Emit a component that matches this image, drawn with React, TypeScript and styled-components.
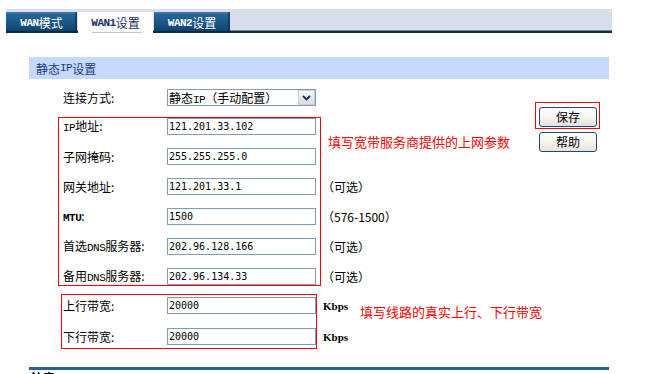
import React from 'react';
import styled, { createGlobalStyle, css } from 'styled-components';

const GlobalStyle = createGlobalStyle`
  html, body { margin: 0; padding: 0; background: #fff; }
  body {
    font-family: "Noto Sans CJK SC", "Liberation Sans", sans-serif;
    font-size: 12px;
    color: #000;
  }
  * { box-sizing: border-box; }
`;

const Page = styled.div`
  width: 649px;
  height: 374px;
  overflow: hidden;
  padding-top: 9px;
`;

const TabBar = styled.div`
  display: flex;
  align-items: flex-end;
  gap: 1px;
  margin-left: 6px;
  width: 606px;
  height: 24px;
  background: #d8dfea;
  border-bottom: 2px solid #0f2a38;
  box-shadow: inset 0 -1px 0 #6f8aa4;
`;

const Tab = styled.div<{ $active?: boolean; $w: number }>`
  position: relative;
  width: ${(p) => p.$w}px;
  height: 21px;
  margin-bottom: -2px;
  padding-top: 1px;
  display: flex;
  align-items: center;
  justify-content: center;
  font-size: 12px;
  line-height: 1;
  white-space: nowrap;
  color: ${(p) => (p.$active ? '#1b2f6b' : '#fff')};
  background: ${(p) =>
    p.$active
      ? '#fff'
      : 'linear-gradient(#4a86b2 0, #28679a 2px, #1b5a8a 40%, #12497a 80%, #0c3656 100%)'};
  ${(p) =>
    !p.$active &&
    css`
      box-shadow: inset -2px 0 0 rgba(5, 30, 50, 0.45), inset 0 -2px 0 #0a2a40;
    `}
  ${(p) =>
    p.$active &&
    css`
      &::after {
        content: '';
        position: absolute;
        left: 14px;
        right: 11px;
        bottom: 0;
        height: 1px;
        background: #c4c4c4;
      }
    `}
`;

const Half = styled.span<{ $bold?: boolean }>`
  font-family: "Liberation Mono", "DejaVu Sans Mono", monospace;
  font-size: 11px;
  letter-spacing: -0.5px;
  font-weight: ${(p) => (p.$bold ? 700 : 400)};
`;

const SectionHeader = styled.div`
  margin: 24px 0 0 29px;
  width: 580px;
  height: 22px;
  padding-left: 7px;
  display: flex;
  align-items: center;
  background: #c5d9fc;
  color: #1c3c78;
  font-size: 12px;
`;

const Main = styled.div`
  display: flex;
  align-items: flex-start;
  margin-left: 29px;
  width: 580px;
`;

const FormColumn = styled.div`
  width: 506px;
  padding: 10px 0 0 29px;
  display: flex;
  flex-direction: column;
`;

const ConnRow = styled.div`
  display: flex;
  align-items: center;
  height: 17px;
  padding-left: 5px;
`;

const FieldLabel = styled.span`
  width: 104px;
  flex: none;
  font-size: 12px;
  line-height: 17px;
  white-space: nowrap;
`;

const SelectBox = styled.div`
  width: 149px;
  height: 17px;
  border: 1px solid #7f9db9;
  display: flex;
  align-items: center;
  justify-content: space-between;
  padding-left: 1px;
  font-size: 12px;
  white-space: nowrap;
  background: #fff;
`;

const SelectArrow = styled.span`
  width: 17px;
  height: 15px;
  display: flex;
  align-items: center;
  justify-content: center;
  background: linear-gradient(#f7f7f7, #dcdcdc);
  border: 1px solid #c3cfdc;
`;

const Block = styled.div<{ $top: number }>`
  display: flex;
  align-items: flex-start;
  margin-top: ${(p) => p.$top}px;
`;

const RedBox = styled.div<{ $pad: string; $gap: number; $ml?: number }>`
  border: 1px solid #ff0000;
  padding: ${(p) => p.$pad};
  margin-left: ${(p) => p.$ml ?? 0}px;
  display: flex;
  flex-direction: column;
  gap: ${(p) => p.$gap}px;
`;

const Row = styled.div`
  display: flex;
  align-items: center;
  height: 17px;
`;

const TextInput = styled.input`
  width: 149px;
  height: 17px;
  margin: 0;
  border: 1px solid #7f9db9;
  padding: 0 1px;
  font-family: "DejaVu Sans Mono", "Liberation Mono", monospace;
  font-size: 10px;
  color: #000;
  background: #fff;
  outline: none;
`;

const HintColumn = styled.div`
  display: grid;
  grid-template-rows: repeat(6, 17px);
  row-gap: 13px;
  padding-top: 1px;
  margin-left: 1px;
`;

const Hint = styled.span<{ $row: string }>`
  grid-row: ${(p) => p.$row};
  align-self: center;
  font-size: 12px;
  line-height: 17px;
  white-space: nowrap;
`;

const RedNote = styled.span<{ $ml: number; $mt?: number }>`
  color: #ff0000;
  font-size: 13px;
  line-height: 17px;
  white-space: nowrap;
  margin-left: ${(p) => p.$ml}px;
  margin-top: ${(p) => p.$mt ?? 0}px;
`;

const GridNote = styled(RedNote)`
  grid-row: 1 / 3;
  align-self: center;
`;

const UnitColumn = styled.div`
  display: flex;
  flex-direction: column;
  gap: 14px;
  padding-top: 4px;
  margin-left: 6px;
`;

const Unit = styled.span`
  height: 17px;
  line-height: 17px;
  font-family: "Liberation Serif", serif;
  font-weight: 700;
  font-size: 11px;
`;

const ButtonColumn = styled.div`
  margin-top: 23px;
  display: flex;
  flex-direction: column;
  align-items: flex-start;
`;

const ButtonFrame = styled.div`
  border: 1px solid #ff0000;
  padding: 4px 2px 1px 3px;
`;

const Button = styled.button<{ $ml?: number; $mt?: number }>`
  width: 58px;
  height: 20px;
  margin: ${(p) => p.$mt ?? 0}px 0 0 ${(p) => p.$ml ?? 0}px;
  padding: 0;
  border: 1px solid #1f4874;
  border-radius: 3px;
  background: linear-gradient(#ffffff 0%, #f6f6f2 45%, #e4e2da 100%);
  font-family: "Noto Sans CJK SC", sans-serif;
  font-size: 12px;
  line-height: 18px;
  color: #000;
`;

const Divider = styled.div`
  margin: 18px 0 0 29px;
  width: 580px;
  height: 3px;
  background: #22638f;
`;

const Notice = styled.div`
  margin-left: 31px;
  padding-top: 1px;
  font-size: 12px;
  font-weight: 700;
  line-height: 14px;
`;

const ChevronIcon = () => (
  <svg width="9" height="6" viewBox="0 0 9 6">
    <path d="M1 1 L4.5 4.5 L8 1" fill="none" stroke="#1c2f57" strokeWidth="1.8" />
  </svg>
);

const wanFields: { label: React.ReactNode; value: string }[] = [
  { label: <><Half>IP</Half>地址:</>, value: '121.201.33.102' },
  { label: '子网掩码:', value: '255.255.255.0' },
  { label: '网关地址:', value: '121.201.33.1' },
  { label: <><Half $bold>MTU</Half>:</>, value: '1500' },
  { label: <>首选<Half>DNS</Half>服务器:</>, value: '202.96.128.166' },
  { label: <>备用<Half>DNS</Half>服务器:</>, value: '202.96.134.33' },
];

const bandwidth = [
  { label: '上行带宽:', value: '20000' },
  { label: '下行带宽:', value: '20000' },
];

export default function App() {
  return (
    <Page>
      <GlobalStyle />
      <TabBar>
        <Tab $w={71}><Half $bold>WAN</Half>模式</Tab>
        <Tab $w={75} $active><Half $bold>WAN1</Half>设置</Tab>
        <Tab $w={76}><Half $bold>WAN2</Half>设置</Tab>
      </TabBar>

      <SectionHeader>静态<Half>IP</Half>设置</SectionHeader>

      <Main>
        <FormColumn>
          <ConnRow>
            <FieldLabel>连接方式:</FieldLabel>
            <SelectBox>
              <span>静态<Half>IP</Half>（手动配置）</span>
              <SelectArrow><ChevronIcon /></SelectArrow>
            </SelectBox>
          </ConnRow>

          <Block $top={11}>
            <RedBox $pad="0 4px" $gap={13}>
              {wanFields.map((f, i) => (
                <Row key={i}>
                  <FieldLabel>{f.label}</FieldLabel>
                  <TextInput defaultValue={f.value} />
                </Row>
              ))}
            </RedBox>
            <HintColumn>
              <GridNote $ml={6}>填写宽带服务商提供的上网参数</GridNote>
              <Hint $row="3">（可选）</Hint>
              <Hint $row="4">（576-1500）</Hint>
              <Hint $row="5">（可选）</Hint>
              <Hint $row="6">（可选）</Hint>
            </HintColumn>
          </Block>

          <Block $top={8}>
            <RedBox $pad="2px 0 3px 1px" $gap={14} $ml={3}>
              {bandwidth.map((f, i) => (
                <Row key={i}>
                  <FieldLabel>{f.label}</FieldLabel>
                  <TextInput defaultValue={f.value} />
                </Row>
              ))}
            </RedBox>
            <UnitColumn>
              <Unit>Kbps</Unit>
              <Unit>Kbps</Unit>
            </UnitColumn>
            <RedNote $ml={12} $mt={9}>填写线路的真实上行、下行带宽</RedNote>
          </Block>
        </FormColumn>

        <ButtonColumn>
          <ButtonFrame>
            <Button>保存</Button>
          </ButtonFrame>
          <Button $ml={4} $mt={3}>帮助</Button>
        </ButtonColumn>
      </Main>

      <Divider />
      <Notice>注意：</Notice>
    </Page>
  );
}
